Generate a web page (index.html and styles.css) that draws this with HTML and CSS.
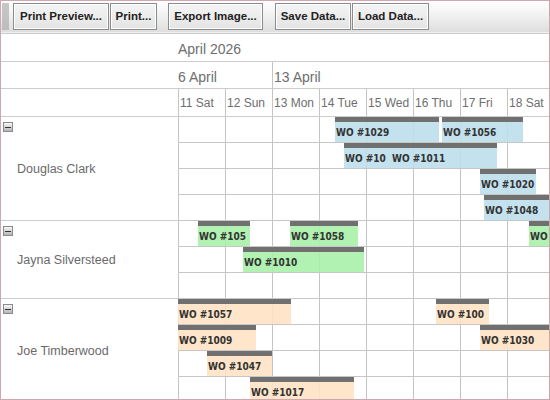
FILE: index.html
```html
<!DOCTYPE html>
<html>
<head>
<meta charset="utf-8">
<link rel="stylesheet" href="styles.css">
</head>
<body>
<div class="frame">
  <div class="toolbar">
    <span class="grip"></span>
    <button class="btn w-preview">Print Preview...</button>
    <button class="btn w-print">Print...</button>
    <span class="sep"></span>
    <button class="btn w-export">Export Image...</button>
    <span class="sep wide"></span>
    <button class="btn w-save">Save Data...</button>
    <button class="btn w-load">Load Data...</button>
  </div>

  <div class="header">
    <div class="hrow month">
      <div class="lead"></div>
      <div class="cells"><span class="label">April 2026</span></div>
    </div>
    <div class="hrow weeks">
      <div class="lead"></div>
      <div class="cells">
        <span class="week first">6 April</span>
        <span class="week">13 April</span>
      </div>
    </div>
    <div class="hrow days">
      <div class="lead"></div>
      <div class="cells">
        <span class="day">11 Sat</span>
        <span class="day">12 Sun</span>
        <span class="day">13 Mon</span>
        <span class="day">14 Tue</span>
        <span class="day">15 Wed</span>
        <span class="day">16 Thu</span>
        <span class="day">17 Fri</span>
        <span class="day">18 Sat</span>
      </div>
    </div>
  </div>

  <div class="group">
    <div class="who"><i class="toggle"></i><span class="name">Douglas Clark</span></div>
    <div class="lanes">
      <div class="lane">
        <div class="bar blue" style="left:157px;width:104px"><span>WO #1029</span></div>
        <div class="bar blue" style="left:264px;width:81px"><span>WO #1056</span></div>
      </div>
      <div class="lane">
        <div class="bar blue" style="left:166px;width:47px"><span>WO #10</span></div>
        <div class="bar blue" style="left:213px;width:106px"><span>WO #1011</span></div>
      </div>
      <div class="lane">
        <div class="bar blue" style="left:302px;width:56px"><span>WO #1020</span></div>
      </div>
      <div class="lane">
        <div class="bar blue" style="left:306px;width:80px"><span>WO #1048</span></div>
      </div>
    </div>
  </div>

  <div class="group">
    <div class="who"><i class="toggle"></i><span class="name">Jayna Silversteed</span></div>
    <div class="lanes">
      <div class="lane">
        <div class="bar green" style="left:20px;width:52px"><span>WO #105</span></div>
        <div class="bar green" style="left:112px;width:68px"><span>WO #1058</span></div>
        <div class="bar green" style="left:351px;width:20px"><span>WO</span></div>
      </div>
      <div class="lane">
        <div class="bar green" style="left:65px;width:121px"><span>WO #1010</span></div>
      </div>
      <div class="lane"></div>
    </div>
  </div>

  <div class="group">
    <div class="who"><i class="toggle"></i><span class="name">Joe Timberwood</span></div>
    <div class="lanes">
      <div class="lane">
        <div class="bar peach" style="left:0;width:113px"><span>WO #1057</span></div>
        <div class="bar peach" style="left:258px;width:53px"><span>WO #100</span></div>
      </div>
      <div class="lane">
        <div class="bar peach" style="left:0;width:78px"><span>WO #1009</span></div>
        <div class="bar peach" style="left:302px;width:69px"><span>WO #1030</span></div>
      </div>
      <div class="lane">
        <div class="bar peach" style="left:29px;width:65px"><span>WO #1047</span></div>
      </div>
      <div class="lane">
        <div class="bar peach" style="left:72px;width:104px"><span>WO #1017</span></div>
      </div>
    </div>
  </div>
</div>
</body>
</html>
```

FILE: styles.css
```css
* { box-sizing: border-box; }

html, body {
  margin: 0;
  padding: 0;
  background: #ffffff;
}

.frame {
  width: 550px;
  height: 400px;
  border: 1px solid #d2a6ae;
  overflow: hidden;
  background: #ffffff;
  font-family: "Liberation Sans", Arial, sans-serif;
}

/* ---------- toolbar ---------- */
.toolbar {
  height: 32px;
  display: flex;
  align-items: center;
  padding: 0 0 1px 1px;
  background: linear-gradient(#ffffff 0%, #f3f3f3 40%, #dedede 100%);
  border-bottom: 1px solid #efefef;
}

.grip {
  flex: none;
  width: 7px;
  height: 27px;
  margin-right: 4px;
  background-image: radial-gradient(circle, #a8a8a8 0.6px, transparent 0.9px);
  background-size: 2px 2px;
}

.btn {
  -webkit-appearance: none;
  appearance: none;
  flex: none;
  height: 27px;
  padding: 0;
  margin: 0 1px 0 0;
  border: 1px solid #8c8c8c;
  box-shadow: inset 0 0 0 1px #ffffff;
  background: linear-gradient(#f4f4f4, #e4e4e4);
  font-family: "Liberation Sans", Arial, sans-serif;
  font-weight: bold;
  font-size: 11.5px;
  color: #222222;
  border-radius: 0;
  text-align: center;
  white-space: nowrap;
}
.w-preview { width: 96px; }
.w-print   { width: 47px; }
.w-export  { width: 95px; }
.w-save    { width: 76px; }
.w-load    { width: 77px; }

.sep {
  flex: none;
  width: 10px;
}
.sep.wide { width: 11px; }

/* ---------- header ---------- */
.header {
  border-top: 1px solid #cbcbcb;
}

.hrow {
  display: flex;
  border-bottom: 1px solid #cccccc;
  color: #6e6e6e;
}

.lead {
  width: 177px;
  flex: none;
}

.cells {
  flex: 1;
  display: flex;
  overflow: hidden;
}

.month { height: 28px; }
.month .label {
  font-size: 14px;
  padding-top: 7px;
}

.weeks { height: 27px; }
.week {
  font-size: 14px;
  padding-top: 7px;
  white-space: nowrap;
}
.week.first {
  width: 94px;
  flex: none;
}
.week + .week {
  border-left: 1px solid #c4c4c4;
  padding-left: 1px;
}

.days { height: 28px; }
.day {
  width: 47px;
  flex: none;
  border-left: 1px solid #c4c4c4;
  padding: 7px 0 0 1px;
  font-size: 12px;
  white-space: nowrap;
}

/* ---------- groups ---------- */
.group {
  display: flex;
}

.who {
  width: 177px;
  flex: none;
  display: grid;
  border-bottom: 1px solid #cccccc;
}
.who > * {
  grid-area: 1 / 1;
}

.toggle {
  align-self: start;
  justify-self: start;
  width: 10px;
  height: 10px;
  margin: 5px 0 0 2px;
  border: 1px solid #8a8a8a;
  background: linear-gradient(#f8f8f8, #b4b4b4);
  display: flex;
  align-items: center;
  justify-content: center;
}
.toggle::before {
  content: "";
  width: 6px;
  height: 1px;
  background: #333333;
}

.name {
  align-self: center;
  padding-left: 16px;
  font-size: 12.5px;
  color: #6a6a6a;
}

.lanes {
  flex: 1;
  overflow: hidden;
}

.lane {
  position: relative;
  height: 26px;
  border-bottom: 1px solid #c6c6c6;
  background-image: repeating-linear-gradient(to right, #c4c4c4 0 1px, transparent 1px 47px);
}

.bar {
  position: absolute;
  top: 0;
  height: 25px;
  border-top: 5px solid #707070;
  display: flex;
  align-items: center;
  padding-left: 1px;
  overflow: hidden;
  white-space: nowrap;
  font-family: "DejaVu Sans Condensed", "DejaVu Sans", Verdana, sans-serif;
  font-stretch: condensed;
  font-weight: bold;
  font-size: 10px;
  color: #333333;
}

.bar.blue  { background: rgba(190, 222, 236, 0.9); }
.bar.green { background: rgba(168, 240, 168, 0.9); }
.bar.peach { background: rgba(255, 226, 196, 0.9); }
```
